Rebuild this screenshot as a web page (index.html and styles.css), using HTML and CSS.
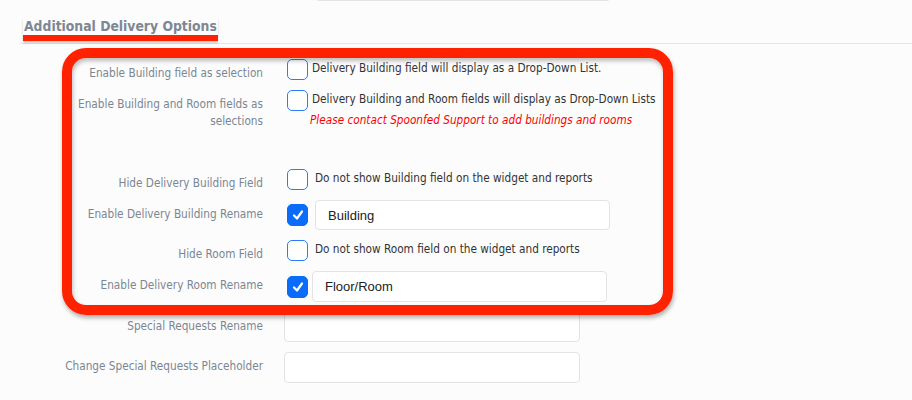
FILE: index.html
```html
<!DOCTYPE html>
<html>
    <head>
        <title>Delivery Options</title>
        <link rel="stylesheet" href="styles.css">
    </head>

    <body>
        <div class="page">
            <!-- tail of the previous field -->
            <div class="row top-row">
                <span class="label"></span>
                <div class="ctrl"><input class="field top-field" type="text"></div>
            </div>

            <div class="section-head">
                <h3 class="section-title">Additional Delivery Options</h3>
            </div>

            <div class="form">
                <div class="row">
                    <span class="label">Enable Building field as selection</span>
                    <div class="ctrl check-row">
                        <span class="check"></span>
                        <span class="check-text">Delivery Building field will display as a Drop-Down List.</span>
                    </div>
                </div>

                <div class="row">
                    <span class="label">Enable Building and Room fields as selections</span>
                    <div class="ctrl">
                        <div class="check-row">
                            <span class="check"></span>
                            <span class="check-text">Delivery Building and Room fields will display as Drop-Down Lists</span>
                        </div>
                        <div class="note">Please contact Spoonfed Support to add buildings and rooms</div>
                    </div>
                </div>

                <div class="spacer"></div>

                <div class="row">
                    <span class="label">Hide Delivery Building Field</span>
                    <div class="ctrl check-row wide-gap">
                        <span class="check"></span>
                        <span class="check-text">Do not show Building field on the widget and reports</span>
                    </div>
                </div>

                <div class="row">
                    <span class="label">Enable Delivery Building Rename</span>
                    <div class="ctrl check-row input-row wide-gap">
                        <span class="check on">
                            <svg width="12" height="12" viewBox="0 0 12 12"><polyline points="2,6.5 5,9.5 10,2.5" fill="none" stroke="#fff" stroke-width="2.2" stroke-linecap="round" stroke-linejoin="round"/></svg>
                        </span>
                        <input class="field" type="text" value="Building">
                    </div>
                </div>

                <div class="row">
                    <span class="label">Hide Room Field</span>
                    <div class="ctrl check-row wide-gap">
                        <span class="check"></span>
                        <span class="check-text">Do not show Room field on the widget and reports</span>
                    </div>
                </div>

                <div class="row">
                    <span class="label">Enable Delivery Room Rename</span>
                    <div class="ctrl check-row input-row">
                        <span class="check on">
                            <svg width="12" height="12" viewBox="0 0 12 12"><polyline points="2,6.5 5,9.5 10,2.5" fill="none" stroke="#fff" stroke-width="2.2" stroke-linecap="round" stroke-linejoin="round"/></svg>
                        </span>
                        <input class="field tall" type="text" value="Floor/Room">
                    </div>
                </div>

                <div class="row">
                    <span class="label">Special Requests Rename</span>
                    <div class="ctrl"><input class="field" type="text"></div>
                </div>

                <div class="row">
                    <span class="label">Change Special Requests Placeholder</span>
                    <div class="ctrl"><input class="field tall" type="text"></div>
                </div>
            </div>

            <!-- annotation drawn over the form -->
            <div class="callout"></div>
        </div>
    </body>
</html>
```

FILE: styles.css
```css
html, body {
    margin: 0;
    height: 100%;
    overflow: hidden;
    background: #fcfcfc;
}

.page {
    position: relative;
    display: flow-root;
    font-family: "DejaVu Sans Condensed", "DejaVu Sans", Verdana, sans-serif;
    font-stretch: condensed;
    font-size: 11.7px;
}

.top-row {
    margin-top: -29px;
}

.top-row .ctrl {
    padding-left: 31px;
}

.top-field {
    width: 277px;
}

.section-head {
    margin: 17px 0 0 20px;
    padding-bottom: 2px;
    border-bottom: 1px solid #e6e6e6;
}

.section-title {
    display: inline-block;
    margin: 0 0 0 3px;
    padding: 0 1px;
    font-size: 13.8px;
    line-height: 17px;
    color: #7c8794;
    border-bottom: 6px solid #ff2200;
    box-shadow: 0 2px 2px rgba(0, 0, 0, 0.2);
}

.form {
    display: flex;
    flex-direction: column;
    gap: 10px;
    margin-top: 15px;
}

.row {
    display: grid;
    grid-template-columns: 263px 1fr;
    column-gap: 21px;
}

.label {
    padding: 6px 0 0 60px;
    margin-bottom: -2px;
    line-height: 17px;
    text-align: right;
    color: #7b8692;
}

.check-row {
    display: flex;
    align-items: flex-start;
    gap: 4px;
}

.wide-gap {
    gap: 7px;
}

.input-row {
    align-items: center;
}

.check {
    box-sizing: border-box;
    flex: none;
    display: flex;
    align-items: center;
    justify-content: center;
    width: 21px;
    height: 21px;
    margin-left: 3px;
    border: 1.5px solid #2b7cf6;
    border-radius: 5px;
    background: #fff;
}

.check.on {
    background: #0a6cf8;
    border-color: #0a6cf8;
    height: 22px;
}

.check-text {
    line-height: 19px;
    color: #333;
}

.note {
    margin-top: 1px;
    padding-left: 26px;
    line-height: 17px;
    color: #ff0000;
    font-style: italic;
}

.spacer {
    height: 20px;
}

.field {
    box-sizing: border-box;
    width: 296px;
    height: 30px;
    margin: 0;
    padding: 0 12px;
    border: 1px solid #e3e3e3;
    border-radius: 4px;
    background: #fff;
    font-family: "Liberation Sans", Arial, sans-serif;
    font-size: 13px;
    color: #222;
}

.field.tall {
    height: 31px;
}

.input-row .field {
    width: 295px;
}

.callout {
    position: absolute;
    left: 62px;
    top: 48px;
    width: 611px;
    height: 267px;
    box-sizing: border-box;
    border: 10px solid #ff2200;
    border-radius: 24px;
    box-shadow: 1px 3px 4px rgba(0, 0, 0, 0.3), inset 1px 3px 4px rgba(0, 0, 0, 0.25);
}
```
